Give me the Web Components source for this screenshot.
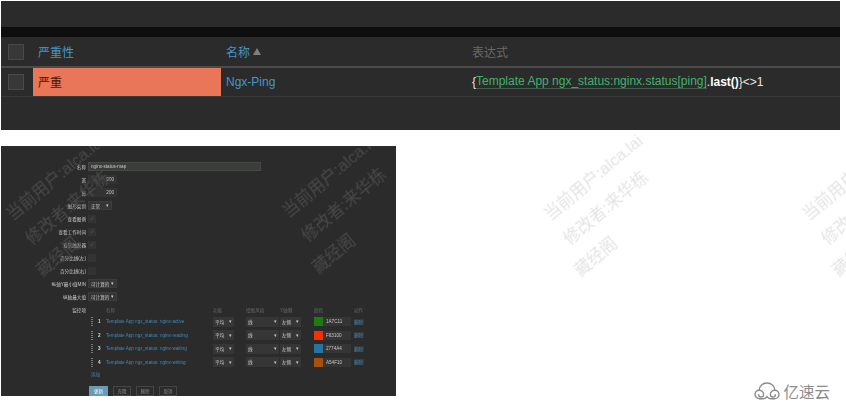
<!DOCTYPE html>
<html>
<head>
<meta charset="utf-8">
<style>
  html, body { margin: 0; background: #fff; }
  body { width: 846px; height: 405px; overflow: hidden; position: relative; font-family: "Liberation Sans", "Noto Sans CJK SC", sans-serif; }
  .page { display: flex; flex-direction: column; gap: 16px; padding: 1px 0 0 1px; position: relative; z-index: 1; }
  .bottom { display: flex; justify-content: space-between; align-items: flex-end; padding-right: 16px; }
</style>
</head>
<body>
<water-mark x="537" y="205" color="#e4e4e4"></water-mark>
<water-mark x="795" y="205" color="#e4e4e4"></water-mark>
<div class="page">
  <trigger-table></trigger-table>
  <div class="bottom">
    <graph-form></graph-form>
    <brand-logo></brand-logo>
  </div>
</div>

<script>
class WaterMark extends HTMLElement {
  connectedCallback() {
    const shadow = this.attachShadow({ mode: 'open' });
    const x = this.getAttribute('x');
    const y = this.getAttribute('y');
    const color = this.getAttribute('color');

    shadow.innerHTML = `
    <style>
      :host {
        position: absolute;
        left: ${x}px;
        top: ${y}px;
        transform: rotate(-40deg);
        transform-origin: 0 0;
        font: 16.5px/31px "Liberation Sans", "Noto Sans CJK SC", sans-serif;
        color: ${color};
        white-space: nowrap;
        filter: blur(0.3px);
      }

      div { display: block; }
      .second { margin-left: -1px; }
      .third { margin-left: -13px; }
    </style>
    <div>当前用户:alca.lai</div>
    <div class="second">修改者:来华栋</div>
    <div class="third">藏经阁</div>
  `;
  }
}

class TriggerTable extends HTMLElement {
  connectedCallback() {
    const shadow = this.attachShadow({ mode: 'open' });

    shadow.innerHTML = `
    <style>
      :host {
        display: block;
        width: 839px;
        height: 129px;
        background: #2b2b2b;
        font: 12px "Liberation Sans", "Noto Sans CJK SC", sans-serif;
        color: #ddd;
      }

      .top { height: 26px; }
      .black { height: 10px; background: #0e0e0e; }

      .grid {
        display: grid;
        grid-template-columns: 32px 188px 246px 1fr;
      }

      .head { height: 29px; border-bottom: 2px solid #4b4b4b; }
      .row { height: 28px; border-bottom: 1px solid #393939; }

      .cell { display: flex; align-items: center; padding-left: 5px; }
      .head .cell { padding-bottom: 1px; box-sizing: border-box; }
      .row .cell { padding-bottom: 1px; box-sizing: border-box; }
      .check { padding-left: 7px; }
      .grid .check { padding-bottom: 0; }

      .box {
        width: 14px;
        height: 14px;
        border: 1px solid #4a4a4a;
        background: #383838;
      }

      .link { color: #4796c4; }
      .muted { color: #6a6a6a; }

      .arrow {
        width: 0;
        height: 0;
        margin: 1px 0 0 3px;
        border-left: 4px solid transparent;
        border-right: 4px solid transparent;
        border-bottom: 7px solid #7f7f7f;
      }

      .severe { background: #e97659; color: #4d0f00; }
      .expr { color: #e6e6e6; white-space: pre; }
      .item { color: #41b26c; border-bottom: 1px solid #4b5a50; }
      b { color: #fff; }
    </style>
    <div class="top"></div>
    <div class="black"></div>
    <div class="grid head">
      <div class="cell check"><span class="box"></span></div>
      <div class="cell link">严重性</div>
      <div class="cell link">名称<span class="arrow"></span></div>
      <div class="cell muted">表达式</div>
    </div>
    <div class="grid row">
      <div class="cell check"><span class="box"></span></div>
      <div class="cell severe">严重</div>
      <div class="cell link">Ngx-Ping</div>
      <div class="cell expr">{<span class="item">Template App ngx_status:nginx.status[ping]</span>.<b>last()</b>}&lt;&gt;1</div>
    </div>
  `;
  }
}

class GraphForm extends HTMLElement {
  connectedCallback() {
    const shadow = this.attachShadow({ mode: 'open' });

    const items = [
      ['nginx-active', '#1a7c11', '1A7C11'],
      ['nginx-reading', '#f63100', 'F63100'],
      ['nginx-waiting', '#2774a4', '2774A4'],
      ['nginx-writing', '#a54f10', 'A54F10'],
    ];

    const itemRows = items.map(([name, color, code], index) => `
      <div class="item">
        <span class="grip"></span>
        <span class="num">${index + 1}</span>
        <span class="link name">Template App ngx_status: ${name}</span>
        <span class="sel w21">平均</span>
        <span class="sel w33">线</span>
        <span class="sel w21">左侧</span>
        <span class="color"><i style="background:${color}"></i><span class="code">${code}</span></span>
        <span class="action">删除</span>
      </div>`).join('');

    shadow.innerHTML = `
    <style>
      :host {
        display: block;
        width: 395px;
        height: 250px;
        background: #2b2b2b;
        position: relative;
        overflow: hidden;
        font: 4.6px "Liberation Sans", "Noto Sans CJK SC", sans-serif;
        color: #c8c8c8;
      }

      .form {
        display: flex;
        flex-direction: column;
        padding-top: 14px;
        filter: blur(0.4px);
      }

      .line {
        display: grid;
        grid-template-columns: 85px 1fr;
        column-gap: 2px;
        height: 13px;
        align-items: center;
      }

      .line > label { text-align: right; }

      .field {
        display: flex;
        align-items: center;
        height: 9px;
        box-sizing: border-box;
        padding: 0 2px;
        background: #3a3d3a;
        border: 1px solid #464846;
      }

      .name-field { width: 173px; }
      .size { width: 29px; justify-content: flex-end; background: #333; border-color: #333; }
      .select { width: 29px; justify-content: space-between; background: #353535; border-color: #3c3c3c; }
      .short { width: 24px; }
      .select::after, .sel::after { content: "▾"; }

      .tick {
        width: 8px;
        height: 8px;
        background: #333;
        color: #666;
        line-height: 8px;
        text-align: center;
      }

      .items { display: flex; flex-direction: column; margin: -13px 0 0 87px; }

      .item, .cols {
        display: grid;
        grid-template-columns: 10px 8px 107px 33px 34px 34px 40px 1fr;
        align-items: center;
      }

      .item { height: 13.5px; }
      .cols { height: 11px; margin-top: 1px; color: #666; }
      .cols span:nth-child(1) { grid-column: 3; }

      .grip {
        width: 2px;
        height: 9px;
        margin-left: 3px;
        background: repeating-linear-gradient(#777 0 1px, transparent 1px 2px);
      }

      .num { font-weight: bold; color: #ddd; }
      .link { color: #4288b4; }
      .action { color: #3f7fa8; background: #323a40; width: 10px; }

      .sel {
        display: flex;
        align-items: center;
        justify-content: space-between;
        box-sizing: border-box;
        height: 10px;
        padding: 0 2px;
        background: #363636;
      }

      .w21 { width: 21px; }
      .w33 { width: 33px; }

      .color { display: flex; align-items: center; }
      .color i { width: 9px; height: 9px; }
      .code { width: 28px; height: 9px; line-height: 9px; padding-left: 3px; box-sizing: border-box; background: #353535; }

      .add { padding-left: 3px; height: 9px; line-height: 9px; margin-top: 1px; }

      .buttons { display: flex; gap: 5px; margin: 7px 0 0 88px; }

      .buttons span {
        display: flex;
        align-items: center;
        justify-content: center;
        box-sizing: border-box;
        width: 18px;
        height: 10px;
        border: 1px solid #454545;
        color: #8a8a8a;
      }

      .buttons .primary { width: 19px; background: #6a9ab5; border-color: #6a9ab5; color: #fff; }
    </style>
    <div class="form">
      <div class="line"><label>名称</label><div class="field name-field">nginx-status-map</div></div>
      <div class="line"><label>宽</label><div class="field size">900</div></div>
      <div class="line"><label>高</label><div class="field size">200</div></div>
      <div class="line"><label>图形类别</label><div class="field select short">正常</div></div>
      <div class="line"><label>查看图例</label><div class="tick">✓</div></div>
      <div class="line"><label>查看工作时间</label><div class="tick">✓</div></div>
      <div class="line"><label>查看触发器</label><div class="tick">✓</div></div>
      <div class="line"><label>百分比线(左)</label><div class="tick"></div></div>
      <div class="line"><label>百分比线(右)</label><div class="tick"></div></div>
      <div class="line"><label>纵轴Y最小值MIN</label><div class="field select">可计算的</div></div>
      <div class="line"><label>纵轴最大值</label><div class="field select">可计算的</div></div>
      <div class="line"><label>监控项</label><div></div></div>
      <div class="items">
        <div class="cols"><span>名称</span><span>功能</span><span>绘图风格</span><span>Y轴侧</span><span>颜色</span><span>动作</span></div>
        ${itemRows}
        <div class="add link">添加</div>
      </div>
      <div class="buttons">
        <span class="primary">更新</span><span>克隆</span><span>删除</span><span>取消</span>
      </div>
    </div>
    <water-mark x="-2" y="59" color="#484848"></water-mark>
    <water-mark x="274" y="56" color="#484848"></water-mark>
  `;
  }
}

class BrandLogo extends HTMLElement {
  connectedCallback() {
    const shadow = this.attachShadow({ mode: 'open' });

    shadow.innerHTML = `
    <style>
      :host {
        display: flex;
        align-items: center;
        gap: 3px;
        margin-bottom: -4px;
        font: 15.5px "Noto Sans CJK SC", sans-serif;
        line-height: 17px;
        color: #8c8c8c;
      }

      svg { display: block; }
    </style>
    <svg width="26" height="18" viewBox="0 0 26 18" fill="none" stroke="#8c8c8c" stroke-width="1.4" stroke-linecap="round">
      <path d="M6 16.7C3 16.7 1 14.7 1 12.4C1 10 2.9 8.2 5.2 8.2C7.6 8.2 9.6 10.1 9.6 12.4C9.6 13.9 8.4 15 7 15C5.6 15 4.7 14 4.7 12.8"/>
      <path d="M20 16.7C23 16.7 25 14.7 25 12.4C25 10 23.1 8.2 20.8 8.2C18.4 8.2 16.4 10.1 16.4 12.4C16.4 13.9 17.6 15 19 15C20.4 15 21.3 14 21.3 12.8"/>
      <path d="M5.2 8.2C5.4 4 8.7 1 13 1C17.3 1 20.6 4 20.8 8.2"/>
      <path d="M6 16.7H9.5C11 16.7 12.2 15.8 13 14.6C13.8 15.8 15 16.7 16.5 16.7H20"/>
    </svg>
    <span>亿速云</span>
  `;
  }
}

customElements.define('water-mark', WaterMark);
customElements.define('trigger-table', TriggerTable);
customElements.define('graph-form', GraphForm);
customElements.define('brand-logo', BrandLogo);
</script>
</body>
</html>
